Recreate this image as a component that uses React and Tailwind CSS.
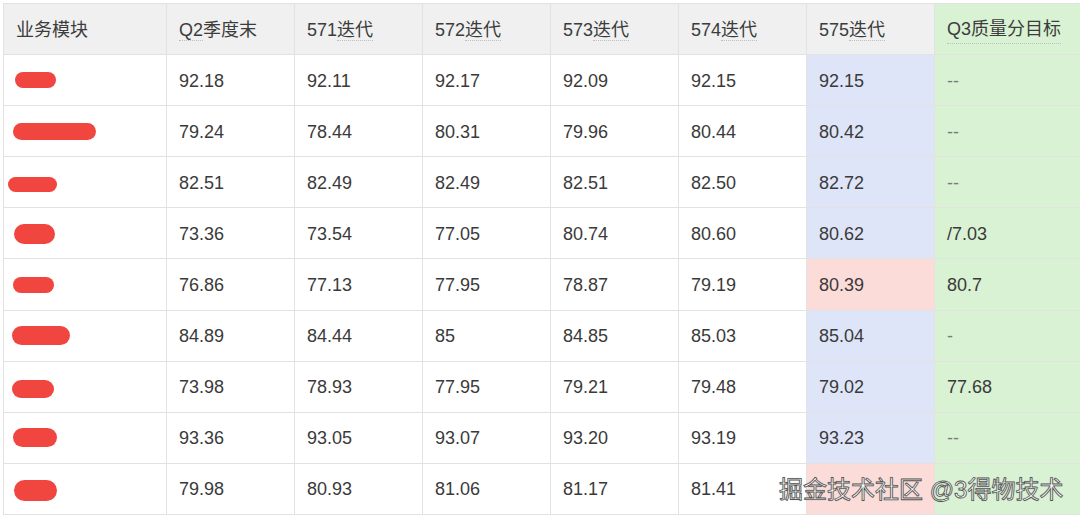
import React from "react";

const headers = ["业务模块", "Q2季度末", "571迭代", "572迭代", "573迭代", "574迭代", "575迭代", "Q3质量分目标"];

const rows = [
  { blob: "ml-[11px] mt-[17px] w-[41px] h-[16px]", v: ["92.18", "92.11", "92.17", "92.09", "92.15", "92.15"], p: false, g: "--" },
  { blob: "ml-[9px] mt-[17px] w-[83px] h-[17px]", v: ["79.24", "78.44", "80.31", "79.96", "80.44", "80.42"], p: false, g: "--" },
  { blob: "ml-[4px] mt-[20px] w-[49px] h-[15px]", v: ["82.51", "82.49", "82.49", "82.51", "82.50", "82.72"], p: false, g: "--" },
  { blob: "ml-[10px] mt-[16px] w-[41px] h-[20px]", v: ["73.36", "73.54", "77.05", "80.74", "80.60", "80.62"], p: false, g: "/7.03", dark: true },
  { blob: "ml-[9px] mt-[18px] w-[41px] h-[16px]", v: ["76.86", "77.13", "77.95", "78.87", "79.19", "80.39"], p: true, g: "80.7", dark: true },
  { blob: "ml-[8px] mt-[15px] w-[58px] h-[19px]", v: ["84.89", "84.44", "85", "84.85", "85.03", "85.04"], p: false, g: "-" },
  { blob: "ml-[8px] mt-[18px] w-[42px] h-[18px]", v: ["73.98", "78.93", "77.95", "79.21", "79.48", "79.02"], p: false, g: "77.68", dark: true },
  { blob: "ml-[9px] mt-[15px] w-[44px] h-[19px]", v: ["93.36", "93.05", "93.07", "93.20", "93.19", "93.23"], p: false, g: "--" },
  { blob: "ml-[10px] mt-[16px] w-[43px] h-[21px]", v: ["79.98", "80.93", "81.06", "81.17", "81.41", ""], p: true, g: "" },
];

const font = { fontFamily: '"Liberation Sans", "Noto Sans CJK SC", sans-serif' };

function HeaderCell({ text, i }) {
  const bg = i === 7 ? "bg-[#d9f2d3]" : "bg-[#f0f0f0]";
  let label;
  if (i === 0) label = <span>{text}</span>;
  else if (i === 1)
    label = (
      <span>
        <span className="border-b border-dotted border-[#b9c2c2]">Q2</span>季度末
      </span>
    );
  else if (i === 7)
    label = <span className="border-b border-dotted border-[#b9c2c2]">{text}</span>;
  else
    label = (
      <span>
        {text.slice(0, 3)}
        <span className="border-b border-dotted border-[#b9c2c2]">{text.slice(3)}</span>
      </span>
    );
  return (
    <div className={`${bg} border-r border-b border-[#e2e2e2] flex items-center pt-[2px] px-3 text-[18px] text-[#3c3c3c]`}>
      {label}
    </div>
  );
}

export default function App() {
  return (
    <div className="relative w-[1080px] h-[520px] bg-white overflow-hidden" style={font}>
      <div className="pt-[3px] pl-[3px]">
        <div className="grid grid-cols-[163px_128px_128px_128px_128px_128px_128px_146px] auto-rows-[51.1px] border-l border-t border-[#e2e2e2]">
          {headers.map((h, i) => (
            <HeaderCell key={i} text={h} i={i} />
          ))}
          {rows.map((r, ri) => (
            <React.Fragment key={ri}>
              <div className="border-r border-b border-[#e2e2e2] bg-white flex items-start">
                <div className={`${r.blob} rounded-full bg-[#f1453f]`} />
              </div>
              {r.v.map((v, ci) => {
                let bg = "bg-white";
                if (ci === 5) bg = r.p ? "bg-[#fcdcd9]" : "bg-[#dfe5f8]";
                return (
                  <div
                    key={ci}
                    className={`${bg} border-r border-b border-[#e2e2e2] flex items-center pt-[2px] px-3 text-[18px] text-[#3a3a3a]`}
                  >
                    {v}
                  </div>
                );
              })}
              <div
                className={`bg-[#d9f2d3] border-r border-b border-[#e2e2e2] flex items-center pt-[2px] px-3 text-[18px] ${
                  r.dark ? "text-[#3a3a3a]" : "text-[#7a7a7a]"
                }`}
              >
                {r.g}
              </div>
            </React.Fragment>
          ))}
        </div>
      </div>
      <div className="absolute left-[779px] top-[474px] text-[24px] leading-[32px] text-white whitespace-nowrap [-webkit-text-stroke:0.8px_#555] [text-shadow:0_0_1px_#777]">
        掘金技术社区 @3得物技术
      </div>
    </div>
  );
}
